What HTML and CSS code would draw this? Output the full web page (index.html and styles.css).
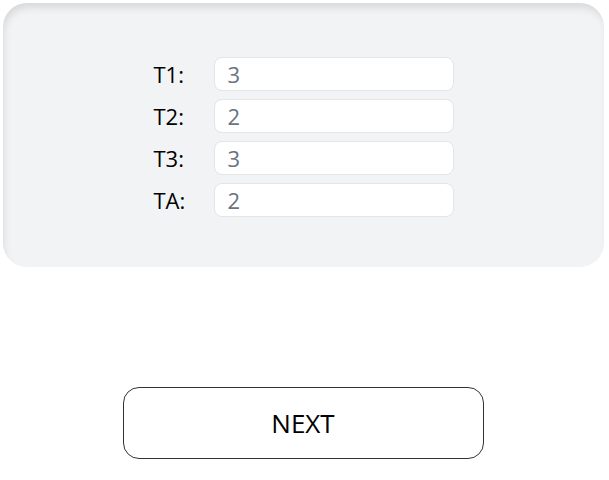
FILE: index.html
```html
<!DOCTYPE html>
<html>
<head>
<meta charset="utf-8">
<link rel="stylesheet" href="styles.css">
</head>
<body>
<div class="page">
  <div class="panel">
    <div class="form">
      <div class="row"><span class="label">T1:</span><div class="field">3</div></div>
      <div class="row"><span class="label">T2:</span><div class="field">2</div></div>
      <div class="row"><span class="label">T3:</span><div class="field">3</div></div>
      <div class="row"><span class="label">TA:</span><div class="field">2</div></div>
    </div>
  </div>
  <div class="actions">
    <button class="next">NEXT</button>
  </div>
</div>
</body>
</html>
```
FILE: styles.css
```css
html, body {
  margin: 0;
  padding: 0;
  background: #ffffff;
  font-family: "Open Sans", "Noto Sans", sans-serif;
}
.page {
  padding: 3px 5px 0 3px;
}
.panel {
  background: #f2f3f5;
  border-radius: 24px;
  box-shadow: inset 2px 6px 8px -2px rgba(0, 0, 0, 0.12);
  padding: 54px 0 50px;
  display: flex;
  justify-content: center;
}
.form {
  display: flex;
  flex-direction: column;
  gap: 8px;
}
.row {
  display: flex;
  align-items: center;
}
.label {
  width: 60px;
  font-size: 22px;
  color: #000;
}
.field {
  box-sizing: border-box;
  width: 240px;
  height: 34px;
  background: #fff;
  border: 1px solid #e3e5e9;
  border-radius: 8px;
  padding-left: 13px;
  font-size: 22px;
  line-height: 32px;
  color: #6b7280;
}
.actions {
  display: flex;
  justify-content: center;
  padding-top: 120px;
}
.next {
  width: 361px;
  height: 72px;
  margin-right: 1px;
  background: #fff;
  border: 1px solid #333;
  border-radius: 16px;
  font-family: "Open Sans", "Noto Sans", sans-serif;
  font-size: 26px;
  font-weight: 500;
  color: #000;
}
```
